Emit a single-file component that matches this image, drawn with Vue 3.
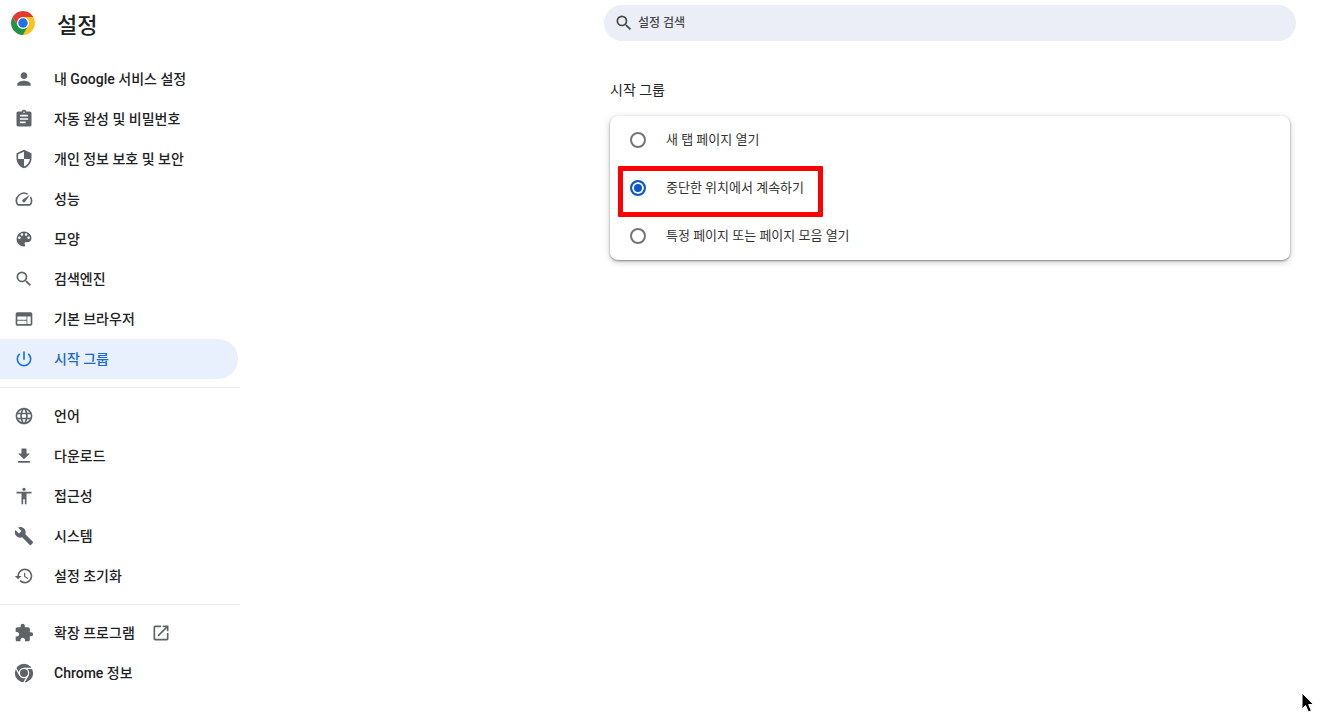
<script setup>
import { ref } from 'vue'

const groups = [
  [
    { label: '내 Google 서비스 설정', icon: 'person' },
    { label: '자동 완성 및 비밀번호', icon: 'clipboard' },
    { label: '개인 정보 보호 및 보안', icon: 'shield' },
    { label: '성능', icon: 'speed' },
    { label: '모양', icon: 'palette' },
    { label: '검색엔진', icon: 'search' },
    { label: '기본 브라우저', icon: 'web' },
    { label: '시작 그룹', icon: 'power', active: true }
  ],
  [
    { label: '언어', icon: 'globe' },
    { label: '다운로드', icon: 'download' },
    { label: '접근성', icon: 'accessibility' },
    { label: '시스템', icon: 'build' },
    { label: '설정 초기화', icon: 'restore' }
  ],
  [
    { label: '확장 프로그램', icon: 'extension', external: true },
    { label: 'Chrome 정보', icon: 'chrome' }
  ]
]

const icons = {
  person: 'M12 12c2.21 0 4-1.79 4-4s-1.79-4-4-4-4 1.79-4 4 1.79 4 4 4zm0 2c-2.67 0-8 1.34-8 4v2h16v-2c0-2.66-5.33-4-8-4z',
  clipboard: 'M19 3h-4.18C14.4 1.84 13.3 1 12 1c-1.3 0-2.4.84-2.82 2H5c-1.1 0-2 .9-2 2v14c0 1.1.9 2 2 2h14c1.1 0 2-.9 2-2V5c0-1.1-.9-2-2-2zm-7 0c.55 0 1 .45 1 1s-.45 1-1 1-1-.45-1-1 .45-1 1-1zm2 14H7v-2h7v2zm3-4H7v-2h10v2zm0-4H7V7h10v2z',
  shield: 'M12 1L3 5v6c0 5.55 3.84 10.74 9 12 5.16-1.26 9-6.45 9-12V5l-9-4zm0 10.99h7c-.53 4.12-3.28 7.79-7 8.94V12H5V6.3l7-3.11v8.8z',
  speed: 'M20.38 8.57l-1.23 1.85a8 8 0 0 1-.22 7.58H5.07A8 8 0 0 1 15.58 6.85l1.85-1.23A10 10 0 0 0 3.35 19a2 2 0 0 0 1.72 1h13.85a2 2 0 0 0 1.74-1 10 10 0 0 0-.27-10.44zm-9.79 6.84a2 2 0 0 0 2.83 0l5.66-8.49-8.49 5.66a2 2 0 0 0 0 2.83z',
  palette: 'M12 3a9 9 0 0 0 0 18c.83 0 1.5-.67 1.5-1.5 0-.39-.15-.74-.39-1.01-.23-.26-.38-.61-.38-.99 0-.83.67-1.5 1.5-1.5H16c2.76 0 5-2.24 5-5 0-4.42-4.03-8-9-8zm-5.5 9c-.83 0-1.5-.67-1.5-1.5S5.67 9 6.5 9 8 9.67 8 10.5 7.33 12 6.5 12zm3-4C8.67 8 8 7.33 8 6.5S8.67 5 9.5 5s1.5.67 1.5 1.5S10.33 8 9.5 8zm5 0c-.83 0-1.5-.67-1.5-1.5S13.67 5 14.5 5s1.5.67 1.5 1.5S15.33 8 14.5 8zm3 4c-.83 0-1.5-.67-1.5-1.5S16.67 9 17.5 9s1.5.67 1.5 1.5-.67 1.5-1.5 1.5z',
  search: 'M15.5 14h-.79l-.28-.27A6.47 6.47 0 0 0 16 9.5 6.5 6.5 0 1 0 9.5 16c1.61 0 3.09-.59 4.23-1.57l.27.28v.79l5 4.99L20.49 19l-4.99-5zm-6 0C7.01 14 5 11.99 5 9.5S7.01 5 9.5 5 14 7.01 14 9.5 11.99 14 9.5 14z',
  web: 'M20 4H4c-1.1 0-1.99.9-1.99 2L2 18c0 1.1.9 2 2 2h16c1.1 0 2-.9 2-2V6c0-1.1-.9-2-2-2zm-5 14H4v-4h11v4zm0-5H4V9h11v4zm5 5h-4V9h4v9z',
  power: 'M13 3h-2v10h2V3zm4.83 2.17l-1.42 1.42A6.92 6.92 0 0 1 19 12c0 3.87-3.13 7-7 7s-7-3.13-7-7c0-2.19 1.01-4.14 2.58-5.42L6.17 5.17A8.93 8.93 0 0 0 3 12a9 9 0 0 0 18 0c0-2.74-1.23-5.18-3.17-6.83z',
  globe: 'M11.99 2C6.47 2 2 6.48 2 12s4.47 10 9.99 10C17.52 22 22 17.52 22 12S17.52 2 11.99 2zm6.93 6h-2.95a15.65 15.65 0 0 0-1.38-3.56A8.03 8.03 0 0 1 18.92 8zM12 4.04c.83 1.2 1.48 2.53 1.91 3.96h-3.82c.43-1.43 1.08-2.76 1.91-3.96zM4.26 14C4.1 13.36 4 12.69 4 12s.1-1.36.26-2h3.38c-.08.66-.14 1.32-.14 2s.06 1.34.14 2H4.26zm.82 2h2.95c.32 1.25.78 2.45 1.38 3.56A7.99 7.99 0 0 1 5.08 16zm2.95-8H5.08a7.99 7.99 0 0 1 4.33-3.56A15.65 15.65 0 0 0 8.03 8zM12 19.96c-.83-1.2-1.48-2.53-1.91-3.96h3.82c-.43 1.43-1.08 2.76-1.91 3.96zM14.34 14H9.66c-.09-.66-.16-1.32-.16-2s.07-1.35.16-2h4.68c.09.65.16 1.32.16 2s-.07 1.34-.16 2zm.25 5.56c.6-1.11 1.06-2.31 1.38-3.56h2.95a8.03 8.03 0 0 1-4.33 3.56zM16.36 14c.08-.66.14-1.32.14-2s-.06-1.34-.14-2h3.38c.16.64.26 1.31.26 2s-.1 1.36-.26 2h-3.38z',
  download: 'M19 9h-4V3H9v6H5l7 7 7-7zM5 18v2h14v-2H5z',
  accessibility: 'M12 2c1.1 0 2 .9 2 2s-.9 2-2 2-2-.9-2-2 .9-2 2-2zm9 7h-6v13h-2v-6h-2v6H9V9H3V7h18v2z',
  build: 'M22.7 19l-9.1-9.1c.9-2.3.4-5-1.5-6.9-2-2-5-2.4-7.4-1.3L9 6 6 9 1.6 4.7C.4 7.1.9 10.1 2.9 12.1c1.9 1.9 4.6 2.4 6.9 1.5l9.1 9.1c.4.4 1 .4 1.4 0l2.3-2.3c.5-.4.5-1.1.1-1.4z',
  restore: 'M13 3a9 9 0 0 0-9 9H1l3.89 3.89.07.14L9 12H6c0-3.87 3.13-7 7-7s7 3.13 7 7-3.13 7-7 7c-1.93 0-3.68-.79-4.94-2.06l-1.42 1.42A8.95 8.95 0 0 0 13 21a9 9 0 0 0 0-18zm-1 5v5l4.28 2.54.72-1.21-3.5-2.08V8H12z',
  extension: 'M20.5 11H19V7c0-1.1-.9-2-2-2h-4V3.5a2.5 2.5 0 0 0-5 0V5H4c-1.1 0-1.99.9-1.99 2v3.8H3.5c1.49 0 2.7 1.21 2.7 2.7s-1.21 2.7-2.7 2.7H2V20c0 1.1.9 2 2 2h3.8v-1.5c0-1.49 1.21-2.7 2.7-2.7 1.49 0 2.7 1.21 2.7 2.7V22H17c1.1 0 2-.9 2-2v-4h1.5a2.5 2.5 0 0 0 0-5z',
  open: 'M19 19H5V5h7V3H5a2 2 0 0 0-2 2v14a2 2 0 0 0 2 2h14c1.1 0 2-.9 2-2v-7h-2v7zM14 3v2h3.59l-9.83 9.83 1.41 1.41L19 6.41V10h2V3h-7z'
}

const options = [
  { value: 'newtab', label: '새 탭 페이지 열기' },
  { value: 'continue', label: '중단한 위치에서 계속하기', marked: true },
  { value: 'pages', label: '특정 페이지 또는 페이지 모음 열기' }
]
const startup = ref('continue')
const query = ref('')
</script>

<template>
  <div class="settings">
    <aside class="sidebar">
      <header class="brand">
        <svg class="logo" viewBox="0 0 48 48" aria-hidden="true">
          <path fill="#fcc31e" d="M24 12h20.78A24 24 0 0 1 24 48l10.39-18z" />
          <path fill="#229342" d="M3.22 12L13.61 30 24 36l10.39-6L24 48A24 24 0 0 1 3.22 12z" />
          <path fill="#e33b2e" d="M3.22 12l10.39 18L24 24V12h20.78A24 24 0 0 0 3.22 12z" />
          <circle cx="24" cy="24" r="12" fill="#fff" />
          <circle cx="24" cy="24" r="9.5" fill="#1a73e8" />
        </svg>
        <h1>설정</h1>
      </header>
      <nav>
        <ul v-for="(group, g) in groups" :key="g" class="group">
          <li v-for="item in group" :key="item.label">
            <a href="#" class="item" :class="{ active: item.active }">
              <svg v-if="item.icon === 'chrome'" class="icon" viewBox="0 0 24 24" aria-hidden="true">
                <circle cx="12" cy="12" r="11" fill="currentColor" />
                <g fill="none" stroke="#fff" stroke-width="1.5">
                  <circle cx="12" cy="12" r="5.6" />
                  <path d="M12 6.4h10.5M16.85 14.8L11.6 23.9M7.15 14.8L1.9 5.7" />
                </g>
              </svg>
              <svg v-else class="icon" viewBox="0 0 24 24" aria-hidden="true">
                <path fill="currentColor" :d="icons[item.icon]" />
              </svg>
              <span>{{ item.label }}</span>
              <svg v-if="item.external" class="icon" viewBox="0 0 24 24" aria-hidden="true">
                <path fill="currentColor" :d="icons.open" />
              </svg>
            </a>
          </li>
        </ul>
      </nav>
    </aside>

    <main class="content">
      <label class="search">
        <svg class="icon" viewBox="0 0 24 24" aria-hidden="true">
          <path fill="currentColor" :d="icons.search" />
        </svg>
        <input v-model="query" type="search" placeholder="설정 검색" aria-label="설정 검색" />
      </label>
      <section class="section">
        <h2 id="startup-title">시작 그룹</h2>
        <div class="card" role="radiogroup" aria-labelledby="startup-title">
          <label v-for="o in options" :key="o.value" class="option">
            <input v-model="startup" type="radio" name="startup" :value="o.value" />
            <span>{{ o.label }}</span>
            <i v-if="o.marked" class="marker"></i>
          </label>
        </div>
      </section>
    </main>

    <svg class="cursor" viewBox="0 0 14 22" aria-hidden="true">
      <path d="M1 1v16l3.6-3.4L7.4 20l3-1.3-2.8-6.2h5z" fill="#000" stroke="#fff" stroke-width="1" />
    </svg>
  </div>
</template>

<style>
body {
  margin: 0;
  background: #fff;
}
</style>

<style scoped>
.settings {
  position: relative;
  display: flex;
  justify-content: space-between;
  min-height: 100vh;
  color: #202124;
  font-family: Roboto, "Noto Sans CJK KR", sans-serif;
  font-size: 14px;
}
.sidebar {
  flex: 0 0 240px;
}
.brand {
  display: flex;
  align-items: center;
  gap: 22px;
  height: 51px;
  padding: 0 11px;
  margin-bottom: 8px;
}
.logo {
  width: 24px;
  height: 24px;
  margin-bottom: 6px;
}
h1 {
  margin: 0;
  font-size: 22px;
  font-weight: 500;
  line-height: 32px;
}
.group {
  margin: 0;
  padding: 0;
  list-style: none;
}
.group + .group {
  margin-top: 8px;
  padding-top: 8px;
  border-top: 1px solid #e8e8e8;
}
.item {
  display: flex;
  align-items: center;
  height: 40px;
  margin-right: 2px;
  padding-left: 14px;
  border-radius: 0 20px 20px 0;
  color: #202124;
  font-weight: 500;
  line-height: 20px;
  text-decoration: none;
}
.item span {
  margin: 0 16px 0 20px;
}
.icon {
  flex: none;
  width: 20px;
  height: 20px;
  color: #5f6368;
}
.item.active {
  background: #e8f0fe;
  color: #1967d2;
}
.active .icon {
  color: #1a73e8;
}
.content {
  flex: 0 1 692px;
  margin-right: 39px;
  padding-top: 5px;
}
.search {
  display: flex;
  align-items: center;
  gap: 4px;
  height: 36px;
  padding: 0 10px;
  border-radius: 18px;
  background: #ebeef7;
}
.search .icon {
  color: #474747;
}
.search input {
  flex: 1;
  min-width: 0;
  padding: 0;
  border: 0;
  outline: 0;
  background: none;
  color: #474747;
  font: 500 12px/20px Roboto, "Noto Sans CJK KR", sans-serif;
}
.search input::placeholder {
  color: #474747;
  opacity: 1;
}
.section {
  padding: 39px 6px 0;
}
h2 {
  margin: 0 0 16px;
  font-size: 14px;
  font-weight: 400;
  line-height: 20px;
}
.card {
  border-radius: 8px;
  background: #fff;
  box-shadow: 0 1px 2px rgba(0, 0, 0, 0.4), 0 2px 6px 1px rgba(0, 0, 0, 0.16);
}
.option {
  position: relative;
  display: flex;
  align-items: center;
  gap: 20px;
  height: 48px;
  padding: 0 20px;
  color: #333;
  font-size: 13px;
  line-height: 20px;
}
.option input {
  appearance: none;
  flex: none;
  width: 16px;
  height: 16px;
  margin: 0;
  border: 2px solid #757575;
  border-radius: 50%;
}
.option input:checked {
  border-color: #0b57d0;
  background: #0b57d0;
  box-shadow: inset 0 0 0 2px #fff;
}
.marker {
  position: absolute;
  top: 2px;
  left: 8px;
  box-sizing: border-box;
  width: 205px;
  height: 51px;
  border: 5px solid #ff0000;
  border-radius: 1px;
  pointer-events: none;
}
.cursor {
  position: absolute;
  right: 20px;
  bottom: 4px;
  width: 14px;
  height: 22px;
}
</style>
